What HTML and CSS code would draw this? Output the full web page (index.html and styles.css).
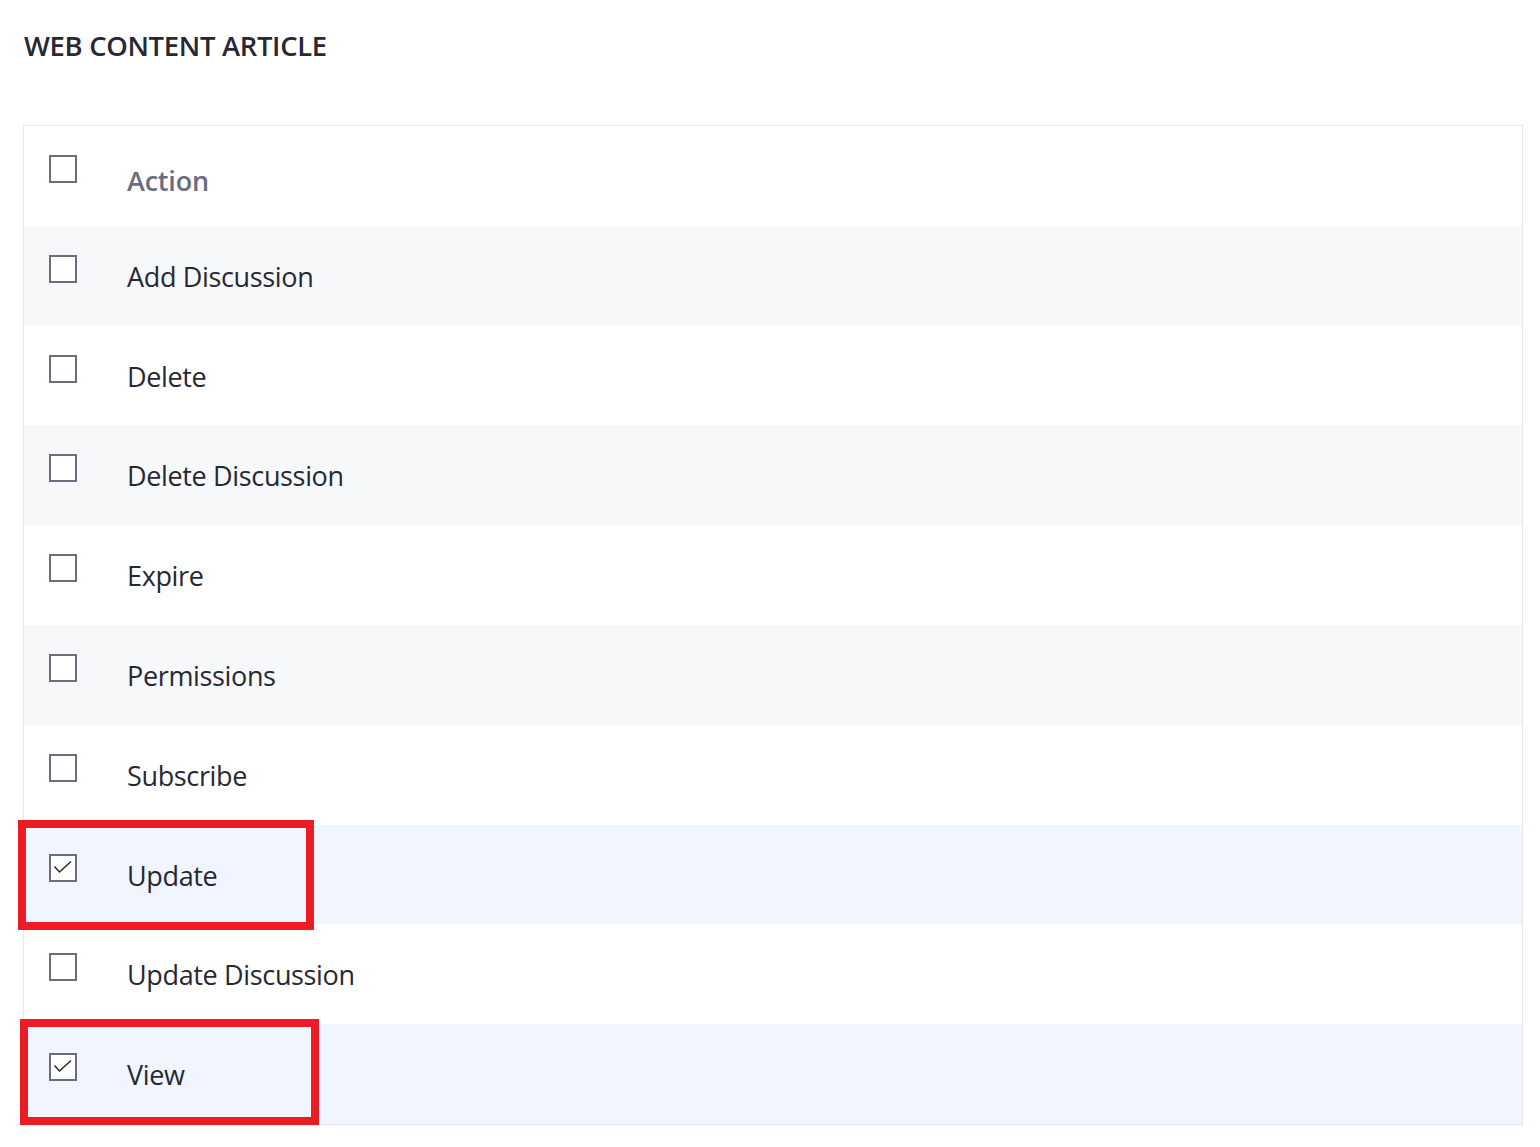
FILE: index.html
```html
<!DOCTYPE html>
<html>
<head>
<meta charset="utf-8">
<link rel="stylesheet" href="styles.css">
</head>
<body>
<div class="page">
  <h2 class="title">WEB CONTENT ARTICLE</h2>
  <div class="table">
    <div class="row head"><span class="cb"></span><span class="label">Action</span></div>
    <div class="row alt"><span class="cb"></span><span class="label">Add Discussion</span></div>
    <div class="row"><span class="cb"></span><span class="label">Delete</span></div>
    <div class="row alt"><span class="cb"></span><span class="label">Delete Discussion</span></div>
    <div class="row"><span class="cb"></span><span class="label">Expire</span></div>
    <div class="row alt"><span class="cb"></span><span class="label">Permissions</span></div>
    <div class="row"><span class="cb"></span><span class="label">Subscribe</span></div>
    <div class="row sel"><span class="cb checked"><svg viewBox="0 0 28 28" width="28" height="28"><path d="M5.5 12.5 L10.5 18 L22 7.5" fill="none" stroke="#272833" stroke-width="1.5"/></svg></span><span class="label">Update</span><span class="mark mark1"></span></div>
    <div class="row"><span class="cb"></span><span class="label">Update Discussion</span></div>
    <div class="row sel"><span class="cb checked"><svg viewBox="0 0 28 28" width="28" height="28"><path d="M5.5 12.5 L10.5 18 L22 7.5" fill="none" stroke="#272833" stroke-width="1.5"/></svg></span><span class="label">View</span><span class="mark mark2"></span></div>
  </div>
</div>
</body>
</html>
```

FILE: styles.css
```css
html, body {
  margin: 0;
  padding: 0;
  background: #fff;
}
.page {
  padding: 0 17px 0 23px;
  font-family: "Open Sans", "Noto Sans", sans-serif;
  color: #272833;
}
.title {
  margin: 0;
  padding: 28px 0 0 1px;
  height: 125px;
  box-sizing: border-box;
  font-size: 27.4px;
  font-weight: 600;
  letter-spacing: -0.3px;
  line-height: 36px;
  color: #272833;
}
.table {
  border: 1px solid #e7e7ed;
  width: 1500px;
  box-sizing: border-box;
}
.row {
  position: relative;
  height: 99.8px;
  display: flex;
  align-items: flex-start;
  background: #fff;
}
.row.alt { background: #f7f8f9; }
.row.sel { background: #f0f5ff; }
.cb {
  width: 28px;
  height: 28px;
  box-sizing: border-box;
  border: 2px solid #6b6c7e;
  background: #fff;
  margin: 29px 0 0 25px;
  position: relative;
  flex: none;
}
.cb svg {
  position: absolute;
  left: -2px;
  top: -2px;
}
.label {
  margin-left: 50px;
  margin-top: 32px;
  font-size: 27px;
  line-height: 38px;
  letter-spacing: -0.35px;
}
.head .label {
  margin-top: 36px;
  font-weight: 600;
  color: #6b6c7e;
  letter-spacing: -0.2px;
}
.mark {
  position: absolute;
  z-index: 2;
  border: 8px solid #ed1c24;
  box-sizing: border-box;
}
.mark1 {
  left: -6px;
  top: -5px;
  width: 296px;
  height: 110px;
}
.mark2 {
  left: -4px;
  top: -5px;
  width: 299px;
  height: 106px;
}
```
